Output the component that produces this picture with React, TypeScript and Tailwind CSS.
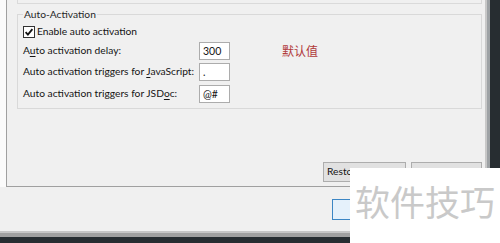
import React from "react";

const font = { fontFamily: 'Lato, "Open Sans", sans-serif' };

function Checkbox() {
  return (
    <svg width="12" height="12" viewBox="0 0 12 12" className="shrink-0">
      <rect x="0.5" y="0.5" width="11" height="11" fill="#ffffff" stroke="#333333" />
      <path d="M2.6 6.2 L4.9 8.6 L9.4 3.2" fill="none" stroke="#111111" strokeWidth="1.8" />
    </svg>
  );
}

function Row({ label, value, mt, extra }: { label: React.ReactNode; value: string; mt: string; extra?: React.ReactNode }) {
  return (
    <div className={`flex items-center h-[18px] ${mt}`}>
      <div className="w-[176px] text-[10.25px] text-[#141414] whitespace-nowrap">{label}</div>
      <div className="w-[31px] h-[18px] bg-white border border-[#acacac] text-[10.5px] text-[#141414] leading-[16px] pl-[3px]">{value}</div>
      {extra}
    </div>
  );
}

export default function App() {
  return (
    <div className="w-[500px] h-[243px] relative overflow-hidden bg-[#272d31]" style={font}>
      <div className="flex h-[237px]">
        <div className="w-[485px] flex flex-col">
          <div className="flex h-[187px]">
            <div className="w-[6px] bg-[#fbfbfb]" />
            <div className="flex-1 bg-[#f0f0f0] border-l border-b border-[#a0a0a0] pl-[10px] pr-[3px] flex flex-col">
              <div className="h-[4px] border-b border-x border-[#dadada]" />
              <fieldset className="mt-[3px] border border-[#d9d9d9] pl-[5px] pb-[5px]">
                <legend className="px-[1px] text-[10.25px] leading-[14px] text-[#262626]">Auto-Activation</legend>
                <div className="flex items-center h-[16px] mt-[3px] gap-[2px]">
                  <Checkbox />
                  <span className="text-[10.25px] text-[#141414]">Enable auto activation</span>
                </div>
                <Row
                  mt="mt-[2px]"
                  label={<>A<u className="underline-offset-2">u</u>to activation delay:</>}
                  value="300"
                  extra={
                    <span
                      className="ml-[52px] text-[12px] text-[#b03a3a]"
                      style={{ fontFamily: '"Noto Sans CJK SC", sans-serif' }}
                    >
                      默认值
                    </span>
                  }
                />
                <Row
                  mt="mt-[3px]"
                  label={<>Auto activation triggers for <u className="underline-offset-2">J</u>avaScript:</>}
                  value="."
                />
                <Row
                  mt="mt-[4px]"
                  label={<>Auto activation triggers for JSD<u className="underline-offset-2">o</u>c:</>}
                  value="@#"
                />
              </fieldset>
              <div className="flex-1" />
              <div className="flex justify-end gap-[5px] pb-[4px]">
                <div className="w-[83px] h-[20px] bg-[#e1e1e1] border border-[#adadad] text-[10.25px] text-[#141414] flex items-center justify-center whitespace-nowrap overflow-hidden">
                  Restore Defaults
                </div>
                <div className="w-[71px] h-[20px] bg-[#e1e1e1] border border-[#adadad] text-[10.25px] text-[#141414] flex items-center justify-center whitespace-nowrap">
                  Apply
                </div>
              </div>
            </div>
          </div>
          <div className="h-[44px] bg-[#f0f0f0] flex justify-end items-start pt-[12px] pr-[3px] gap-[5px]">
            <div className="w-[75px] h-[21px] bg-[#e5f1fb] border border-[#3c86c4] text-[10.25px] flex items-center justify-center">OK</div>
            <div className="w-[70px] h-[21px] bg-[#e1e1e1] border border-[#adadad] text-[10.25px] flex items-center justify-center">Cancel</div>
          </div>
          <div className="h-[2px] bg-[#c6c6c6]" />
          <div className="h-[4px] bg-[#a0a0a0]" />
        </div>
        <div className="w-[2px] bg-[#c8c8c8]" />
        <div className="w-[3px] bg-[#9ea2a5]" />
      </div>
      <div
        className="absolute left-[350px] top-[168px] w-[150px] h-[75px] bg-white flex items-center justify-center pb-[8px] text-[35px] text-[#c9c9c9]"
        style={{ fontFamily: '"Noto Sans CJK SC", sans-serif' }}
      >
        软件技巧
      </div>
    </div>
  );
}
